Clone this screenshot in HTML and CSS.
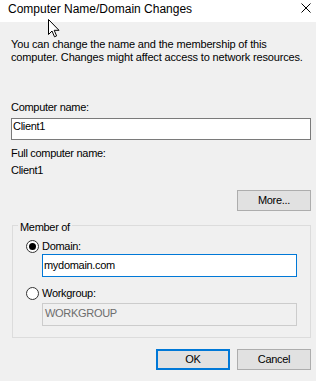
FILE: index.html
```html
<!DOCTYPE html>
<html>
<head>
<meta charset="utf-8">
<link rel="stylesheet" href="styles.css">
</head>
<body>
<div class="window">
  <div class="titlebar">
    <span class="title">Computer Name/Domain Changes</span>
    <svg class="close" width="10" height="10" viewBox="0 0 10 10"><path d="M0.5 0.5 L9.5 9.5 M9.5 0.5 L0.5 9.5" stroke="#000" stroke-width="1" fill="none"/></svg>
  </div>
  <div class="content">
    <p class="desc">You can change the name and the membership of this<br>computer. Changes might affect access to network resources.</p>
    <div class="label label-first">Computer name:</div>
    <div class="field field-name">Client1</div>
    <div class="label label-full">Full computer name:</div>
    <div class="label label-value">Client1</div>
    <div class="more-row"><div class="btn">More...</div></div>
    <fieldset class="group">
      <legend class="legend">Member of</legend>
      <div class="radio-row"><span class="radio checked"><span class="dot"></span></span><span>Domain:</span></div>
      <div class="field field-domain">mydomain.com</div>
      <div class="radio-row radio-row-2"><span class="radio"></span><span>Workgroup:</span></div>
      <div class="field field-disabled">WORKGROUP</div>
    </fieldset>
    <div class="actions">
      <div class="btn btn-default">OK</div>
      <div class="btn">Cancel</div>
    </div>
  </div>
  <svg class="cursor" width="13" height="19" viewBox="0 0 13 19"><path d="M0.5 0.5 L0.5 15.5 L4 12 L6.5 17.8 L8.6 16.9 L6.2 11.3 L11 11.3 Z" fill="#fff" stroke="#000" stroke-width="1" stroke-linejoin="miter"/></svg>
</div>
</body>
</html>
```
FILE: styles.css
```css
html, body {
  margin: 0;
  padding: 0;
}
body {
  background: #f0f0f0;
  font-family: "Liberation Sans", Arial, sans-serif;
  font-size: 11px;
  line-height: 13px;
  letter-spacing: -0.3px;
  color: #000;
}
.window {
  position: relative;
  width: 316px;
  height: 381px;
  overflow: hidden;
}
.titlebar {
  height: 22px;
  box-sizing: border-box;
  background: #fff;
  display: flex;
  justify-content: space-between;
  align-items: flex-start;
  padding: 2px 5px 0 8px;
}
.title {
  font-size: 12px;
  line-height: 14px;
  letter-spacing: 0;
}
.close {
  margin-top: 1px;
}
.content {
  padding: 0 5px 0 11px;
}
.desc {
  margin: 16px 0 0;
  line-height: 13px;
  white-space: nowrap;
  letter-spacing: -0.15px;
}
.label-first {
  margin-top: 37px;
}
.field {
  box-sizing: border-box;
  background: #fff;
  border: 1px solid #7a7a7a;
  padding-left: 1px;
  white-space: nowrap;
}
.field-name {
  margin-top: 4px;
  height: 22px;
  padding-top: 1px;
}
.label-full {
  margin-top: 7px;
}
.label-value {
  margin-top: 4px;
}
.more-row {
  display: flex;
  justify-content: flex-end;
  margin-top: 13px;
}
.btn {
  width: 74px;
  height: 21px;
  box-sizing: border-box;
  border: 1px solid #adadad;
  background: #e1e1e1;
  display: flex;
  align-items: center;
  justify-content: center;
  line-height: 13px;
}
.btn-default {
  border: 2px solid #0078d7;
}
.group {
  margin: 5px 0 0 1px;
  border: 1px solid #dcdcdc;
  padding: 6px 13px 11px 5px;
  min-width: 0;
}
.legend {
  padding: 5px 2px 0;
  line-height: 13px;
}
.radio-row {
  display: flex;
  align-items: center;
  height: 13px;
  margin-left: 8px;
}
.radio-row-2 {
  margin-top: 10px;
}
.radio {
  width: 13px;
  height: 13px;
  box-sizing: border-box;
  border: 1px solid #333;
  border-radius: 50%;
  background: #fff;
  margin-right: 3px;
  display: flex;
  align-items: center;
  justify-content: center;
}
.dot {
  width: 7px;
  height: 7px;
  border-radius: 50%;
  background: #000;
}
.field-domain {
  margin: 1px 0 0 24px;
  height: 23px;
  border-color: #0078d7;
  padding-top: 4px;
}
.field-disabled {
  margin: 3px 0 0 24px;
  height: 23px;
  border-color: #cccccc;
  background: #f0f0f0;
  color: #6d6d6d;
  padding-top: 3px;
  padding-left: 2px;
}
.actions {
  display: flex;
  justify-content: flex-end;
  gap: 7px;
  margin-top: 11px;
}
.cursor {
  position: absolute;
  left: 48px;
  top: 19px;
}
```
